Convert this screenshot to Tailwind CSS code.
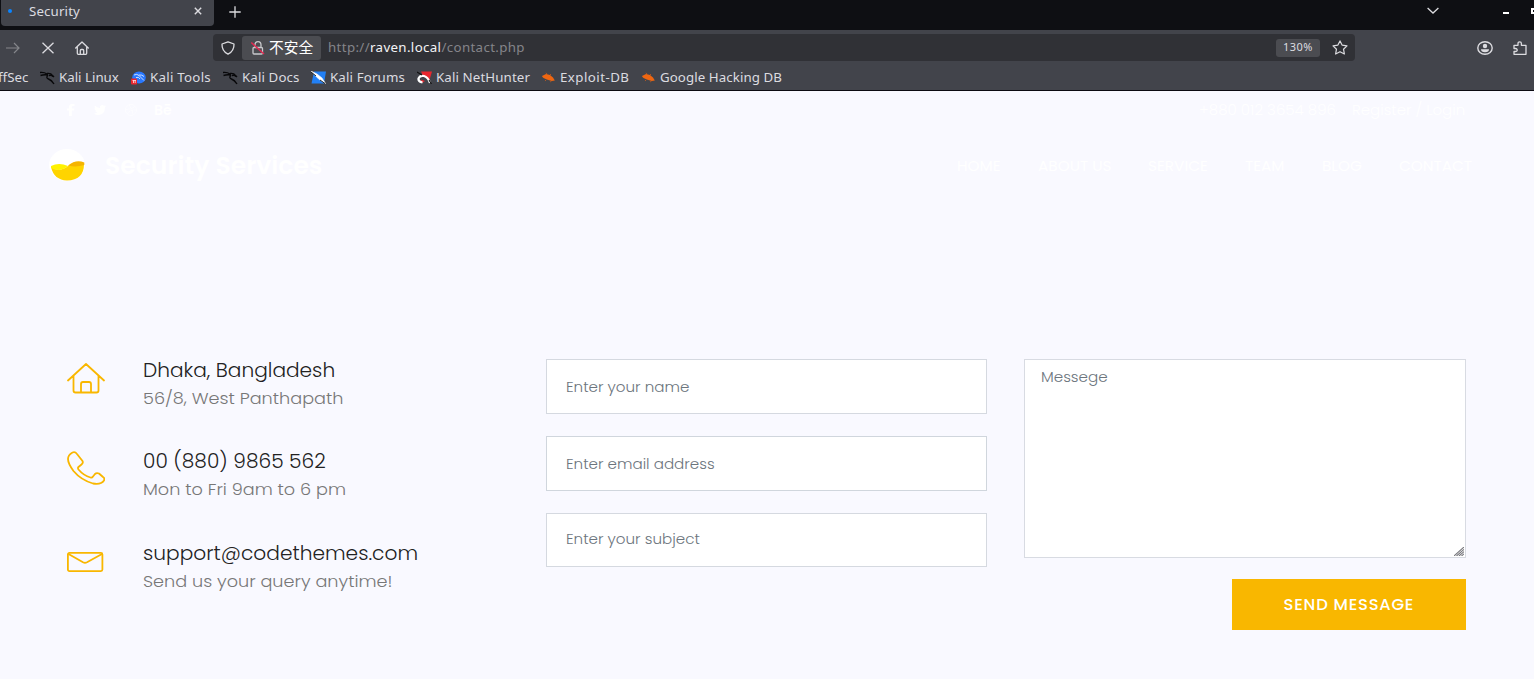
<!DOCTYPE html>
<html lang="en">
<head>
  <meta charset="UTF-8" />
  <meta name="viewport" content="width=device-width, initial-scale=1" />
  <title>Security</title>
  <script src="https://cdn.jsdelivr.net/npm/@tailwindcss/browser@4"></script>
</head>
<body class="w-[1534px] h-[679px] overflow-hidden bg-[#f9f9ff] font-['Noto_Sans','Noto_Sans_CJK_SC',sans-serif]">

  <!-- Tab bar -->
  <div class="h-[30px] bg-[#0e0f13] flex items-start text-[#dcdce0]">
    <div class="w-[213px] h-[26px] ml-px bg-[#42444b] rounded-b-[4px] flex items-center">
      <span class="w-1 h-1 rounded-full bg-[#0a84ff] ml-[7px] mb-1"></span>
      <span class="ml-[17px] mb-[3px] text-[13.3px] tracking-[0.14px]">Security</span>
      <svg class="w-2 h-2 ml-auto mr-3 mb-1" viewBox="0 0 8 8" fill="none" stroke="currentColor" stroke-width="1.4"><path d="M.8.8l6.4 6.4M7.2.8L.8 7.2" /></svg>
    </div>
    <svg class="w-3 h-3 ml-[15px] mt-[6px]" viewBox="0 0 12 12" fill="none" stroke="currentColor" stroke-width="1.3"><path d="M6 .3v11.4M.3 6h11.4" /></svg>
    <svg class="w-3 h-[7px] ml-auto mt-[7px]" viewBox="0 0 12 7" fill="none" stroke="currentColor" stroke-width="1.3"><path d="M.6 1L6 6l5.4-5" /></svg>
    <span class="w-[6px] h-[2px] bg-white ml-[64px] mt-[12px]"></span>
    <span class="w-[3px] h-[6px] border-2 border-r-0 border-white ml-[22px] mt-[8px]"></span>
  </div>

  <!-- Toolbar -->
  <div class="h-8 bg-[#42444b] flex items-center text-[#dcdce0] pt-[3px]">
    <svg class="w-[14px] h-3 ml-[6px] text-[#85868b]" viewBox="0 0 14 12" fill="none" stroke="currentColor" stroke-width="1.2"><path d="M0 6h13M8 1l5 5-5 5" /></svg>
    <svg class="w-3 h-3 ml-[22px]" viewBox="0 0 12 12" fill="none" stroke="currentColor" stroke-width="1.3"><path d="M.5.8l11 10.4M11.5.8L.5 11.2" /></svg>
    <svg class="w-[14px] h-[14px] ml-[21px]" viewBox="0 0 14 14" fill="none" stroke="currentColor" stroke-width="1.3" stroke-linejoin="round" stroke-linecap="round"><path d="M.7 7L7 1l6.3 6M2.3 6v6.3q0 1 1 1h7.4q1 0 1-1V6M5.3 13V9.5q0-1 1-1h1.4q1 0 1 1V13" /></svg>
    <div class="w-[1142px] h-[27px] ml-[124px] bg-[#303136] rounded-[4px] flex items-center">
      <svg class="w-[14px] h-[14px] ml-[8px]" viewBox="0 0 14 14" fill="none" stroke="currentColor" stroke-width="1.3" stroke-linejoin="round"><path d="M7 .8L13 3q.3 7-6 10.2Q.7 10 1 3z" /></svg>
      <div class="w-[79px] h-6 ml-[7px] bg-[#4b4c51] rounded-[3px] flex items-center">
        <svg class="w-[14px] h-[14px] ml-[9px]" viewBox="0 0 14 14" fill="none" stroke="#c9c9cd" stroke-width="1.3"><path d="M4 6V4q0-3.300 3-3.300T10 4v2M3 6.500h7.500q1 0 1 1V12q0 1-1 1H3q-1 0-1-1V7.500q0-1 1-1z" /><path stroke="#e22850" stroke-width="1.500" d="M.3 1.500L13 13" /></svg>
        <span class="ml-[4px] text-[14.7px] text-white whitespace-nowrap">不安全</span>
      </div>
      <span class="ml-[7px] text-[13.3px] tracking-[0.36px] text-[#85858a] whitespace-nowrap">http://<span class="text-[#f4f4f6]">raven.local</span>/contact.php</span>
      <div class="w-[44px] h-[18px] ml-auto bg-[#4b4c51] rounded-[3px] flex items-center justify-center"><span class="text-[11px] tracking-[0.45px]">130%</span></div>
      <svg class="w-4 h-[15px] ml-[12px] mr-[7px]" viewBox="0 0 16 15" fill="none" stroke="currentColor" stroke-width="1.2" stroke-linejoin="round"><path d="M8 .9l2.100 4.200 4.900.8-3.500 3.300.9 4.800L8 11.700 3.600 14l.9-4.800L1 5.900l4.900-.8z" /></svg>
    </div>
    <svg class="w-4 h-[14px] ml-[122px]" viewBox="0 0 16 14"><ellipse cx="8" cy="7" rx="7.2" ry="6.3" fill="none" stroke="currentColor" stroke-width="1.4" /><circle cx="8" cy="5" r="2.2" fill="currentColor" /><path d="M4 8.300h8q0 3-4 3t-4-3z" fill="currentColor" /></svg>
    <svg class="w-[14px] h-[14px] ml-[20px] shrink-0" viewBox="0 0 14 14" fill="none" stroke="currentColor" stroke-width="1.3" stroke-linejoin="round"><path d="M1 13.300V10.500h1.500q1.700 0 1.700-1.500T2.500 7.500H1V4.300h4V2.500Q5 .8 6.700.8t1.700 1.700v1.800H13v9z" /></svg>
  </div>

  <!-- Bookmarks -->
  <div class="h-[29px] pt-[3px] bg-[#42444b] border-b border-[#0c0b12] flex items-center text-[13.3px] text-[#dcdce0] whitespace-nowrap">
    <span class="w-[40px]"><span class="-ml-[2px]">ffSec</span></span>
    <a class="w-[91px] flex items-center gap-[4px]">
      <svg class="w-[15px] h-[14px] shrink-0" viewBox="0 0 15 14" fill="none" stroke="#08080a" stroke-width="1.4"><path d="M0 1.500q4-.5 7 1.500M.5 4.500Q4 3.200 8 4M8 4q-2.500 3 .5 4t5.500 5M7 2.500q4-.5 5.500 2l1.500 1.500M9 4.500q3-.5 4 1" /></svg>
      <span>Kali Linux</span>
    </a>
    <a class="w-[92px] flex items-center gap-[4px]">
      <svg class="w-[15px] h-[14px] shrink-0" viewBox="0 0 15 14"><ellipse cx="8" cy="6.5" rx="6.8" ry="6" fill="#2878ff" /><path d="M3 4q3-1.500 5 .5t5 5M5 6.500q3-1 4 1.500M8 4q3-.5 5 1.500" fill="none" stroke="#dce8ff" stroke-width=".9" /><rect y="7.5" width="6" height="6" rx="1" fill="#e8272f" /><path d="M1.500 9.500h3.500M2.500 9.500v2.500M4.200 9.500v2.500" stroke="#fff" stroke-width=".7" /></svg>
      <span class="tracking-[0.26px]">Kali Tools</span>
    </a>
    <a class="w-[88px] flex items-center gap-[4px]">
      <svg class="w-[15px] h-[14px] shrink-0" viewBox="0 0 15 14" fill="none" stroke="#08080a" stroke-width="1.4"><path d="M0 1.500q4-.5 7 1.500M.5 4.500Q4 3.200 8 4M8 4q-2.500 3 .5 4t5.500 5M7 2.500q4-.5 5.500 2l1.500 1.500M9 4.500q3-.5 4 1" /></svg>
      <span class="tracking-[0.11px]">Kali Docs</span>
    </a>
    <a class="w-[106px] flex items-center gap-[4px]">
      <svg class="w-[15px] h-[13px] shrink-0" viewBox="0 0 15 13"><path d="M3 .5h12l-2 12H.5z" fill="#2280f5" /><path d="M0 0l6 3 5 4 3.500 5.500-5-3-4-3.500z" fill="#fff" stroke="#fff" stroke-width=".6" /><path d="M0 1l5 4M9 9l5 3.500" stroke="#222" stroke-width="1" /></svg>
      <span class="tracking-[0.14px]">Kali Forums</span>
    </a>
    <a class="w-[125px] flex items-center gap-[4px]">
      <svg class="w-[15px] h-[13px] shrink-0" viewBox="0 0 15 13"><path d="M4 .5h11L12.500 9 6 5z" fill="#e8272f" /><path d="M4 8.500l4 1.500-3 2z" fill="#e8272f" /><path d="M5.500 11.500Q1 10.500 1.500 7.500 3 4 7 5t6 7" fill="none" stroke="#fff" stroke-width="2.2" /><path d="M0 1l5 3M12 9l2.500 4" stroke="#111" stroke-width="1.100" /></svg>
      <span class="tracking-[0.11px]">Kali NetHunter</span>
    </a>
    <a class="w-[100px] flex items-center gap-[5px]">
      <svg class="w-[13px] h-[11px] shrink-0" viewBox="0 0 13 11"><path d="M1 3.500l3-1.500 4 1 3 2.500 1.800 3-3 .5-5-1.500L1.500 6 0 4.500z" fill="#ee6611" /><path d="M5 2L4 .8M8 3l1-1M4 8l-1 1M9 9l-.5 1.200" stroke="#ee6611" stroke-width=".6" /></svg>
      <span class="tracking-[0.45px]">Exploit-DB</span>
    </a>
    <a class="flex items-center gap-[5px]">
      <svg class="w-[13px] h-[11px] shrink-0" viewBox="0 0 13 11"><path d="M1 3.500l3-1.500 4 1 3 2.500 1.800 3-3 .5-5-1.500L1.500 6 0 4.500z" fill="#ee6611" /><path d="M5 2L4 .8M8 3l1-1M4 8l-1 1M9 9l-.5 1.200" stroke="#ee6611" stroke-width=".6" /></svg>
      <span class="tracking-[0.07px]">Google Hacking DB</span>
    </a>
  </div>

  <div class="font-[Poppins,Inter,sans-serif]">
    <!-- Header -->
    <header class="h-[268px] text-white">
      <div class="h-[38px] pl-[67px] pr-[76px] flex items-center text-[14px] font-light whitespace-nowrap">
        <svg class="w-2 h-3" viewBox="0 0 8 12" fill="currentColor"><path d="M2 12V6.500H0v-2h2V3q0-3 3-3h2.500v2H6Q4.800 2 4.800 3v1.500h2.700L7 6.500H4.800V12z" /></svg>
        <svg class="w-3 h-[10px] ml-[19px]" viewBox="0 0 12 10" fill="currentColor"><path d="M0 8.500q2 0 3.200-1Q1.500 7 1.200 5.800h1Q.4 5 .4 3.200l1 .3Q0 2.200.8.4 3 2.800 6 2.900 5.700 0 8.300 0q1 0 1.700.8L11.600.2 10.800 1.500 12 1.200 11 2.500Q10.800 10 4 10 1.700 10 0 8.500z" /></svg>
        <svg class="w-3 h-3 ml-[19px] opacity-60" viewBox="0 0 12 12" fill="none" stroke="currentColor"><circle cx="6" cy="6" r="5.5" /><path d="M4 1q4 4 4 10M1 5.500q6 0 9-3M2 10q3-5 9-4" /></svg>
        <span class="ml-[17px] font-semibold">Bē</span>
        <span class="ml-auto origin-left scale-x-[1.07]">+880 012 3654 896</span>
        <span class="ml-[25px] origin-left scale-x-[1.07]">Register / Login</span>
      </div>
      <div class="h-[74px] pl-[49px] pr-[62px] flex items-center">
        <svg class="w-[36px] h-[32px] mb-[2px]" viewBox="0 0 36 32"><ellipse cx="18" cy="16" rx="18" ry="16" fill="#fff" /><path d="M2 18q8 6 17-1t16-2q0 16-17 16.500Q5 31 2 18z" fill="#ffd400" /><path d="M19 16.500Q27 10 35.300 13.500v2.500q-8 2.500-16.300.5z" fill="#f5b400" /><path d="M2 17q8-4 17 0-8 7-17 2z" fill="#fff200" /></svg>
        <span class="ml-[20px] text-[24px] font-semibold whitespace-nowrap origin-left scale-x-[1.045]">Security Services</span>
        <nav class="ml-auto flex text-[14px] whitespace-nowrap">
          <a class="w-[81px]"><span class="inline-block origin-left scale-x-[1.09]">HOME</span></a>
          <a class="w-[110px]"><span class="inline-block origin-left scale-x-[1.09]">ABOUT US</span></a>
          <a class="w-[97px]"><span class="inline-block origin-left scale-x-[1.09]">SERVICE</span></a>
          <a class="w-[77px]"><span class="inline-block origin-left scale-x-[1.09]">TEAM</span></a>
          <a class="w-[77px]"><span class="inline-block origin-left scale-x-[1.09]">BLOG</span></a>
          <a class="w-[73px]"><span class="inline-block origin-left scale-x-[1.09]">CONTACT</span></a>
        </nav>
      </div>
    </header>

    <!-- Contact -->
    <main class="pl-[67px] flex items-start">
      <div class="w-[479px] flex flex-col whitespace-nowrap">
        <div class="h-[91px] flex">
          <svg class="w-[38px] h-[32px] mt-[4px]" viewBox="0 0 38 32" fill="none" stroke="#f9b700" stroke-width="1.8" stroke-linecap="round" stroke-linejoin="round"><path d="M1 17.500L19 1l18 16.500M6.500 13v14.500q0 2 2 2h21q2 0 2-2V13M14 29V21q0-2 2-2h6q2 0 2 2V29" /></svg>
          <div class="ml-[38px] mt-px">
            <h3 class="text-[19px] leading-[22px] font-light text-[#222222]"><span class="inline-block origin-left scale-x-[1.06]">Dhaka, Bangladesh</span></h3>
            <p class="mt-[5px] text-[16px] leading-[24px] font-light text-[#777777]"><span class="inline-block origin-left scale-x-[1.104]">56/8, West Panthapath</span></p>
          </div>
        </div>
        <div class="h-[92px] flex">
          <svg class="w-[38px] h-[34px] mt-px" viewBox="0 0 38 34" fill="none" stroke="#f9b700" stroke-width="1.8" stroke-linejoin="round"><path d="M1 8Q1 4 5.500 1.500 8 .3 10 3l5.500 7q1 2-1 3.500l-3 2.500q-1 1 0 2.500 5 6 12 8 1.500.5 2.500-1l2-2.500q1.500-1.500 4-.5L36 26q2 1 1 3.500-3 4.500-11 3Q14 29 6.500 20 1 12.500 1 8z" /></svg>
          <div class="ml-[38px] mt-px">
            <h3 class="text-[19px] leading-[22px] font-light text-[#222222]"><span class="inline-block origin-left scale-x-[1.06]">00 (880) 9865 562</span></h3>
            <p class="mt-[5px] text-[16px] leading-[24px] font-light text-[#777777]"><span class="inline-block origin-left scale-x-[1.104]">Mon to Fri 9am to 6 pm</span></p>
          </div>
        </div>
        <div class="flex">
          <svg class="w-[38px] h-[20px] mt-[10px]" viewBox="0 0 38 20" fill="none" stroke="#f9b700" stroke-width="1.8" stroke-linejoin="round"><rect x=".9" y=".9" width="34.5" height="18.2" rx="1.5" /><path d="M1.500 2L16 10.300q2 1 4 0L35 2" /></svg>
          <div class="ml-[38px] mt-px">
            <h3 class="text-[19px] leading-[22px] font-light text-[#222222]"><span class="inline-block origin-left scale-x-[1.062]">support@codethemes.com</span></h3>
            <p class="mt-[5px] text-[16px] leading-[24px] font-light text-[#777777]"><span class="inline-block origin-left scale-x-[1.104]">Send us your query anytime!</span></p>
          </div>
        </div>
      </div>
      <form class="flex items-start text-[14px] font-light text-[#6c757d] whitespace-nowrap">
        <div class="w-[441px] flex flex-col gap-[22px]">
          <div class="h-[55px] px-[19px] pt-[2px] bg-white border border-[#d5d9e0] flex items-center"><span class="origin-left scale-x-[1.08]">Enter your name</span></div>
          <div class="h-[55px] px-[19px] pt-px bg-white border border-[#d0d6dd] flex items-center"><span class="origin-left scale-x-[1.08]">Enter email address</span></div>
          <div class="h-[54px] px-[19px] pb-px bg-white border border-[#d5d9e0] flex items-center"><span class="origin-left scale-x-[1.08]">Enter your subject</span></div>
        </div>
        <div class="w-[442px] ml-[37px] flex flex-col items-end">
          <div class="relative w-full h-[199px] px-[16px] py-[7px] bg-white border border-[#d8dbe2]">
            <span class="inline-block origin-left scale-x-[1.08]">Messege</span>
            <svg class="absolute right-px bottom-px w-[10px] h-[9px]" viewBox="0 0 10 9" stroke="#77777c" stroke-width="1.1"><path d="M0 9L10 0M2.500 9L10 2.300M5 9l5-4.400M7.500 9l2.500-2.200" /></svg>
          </div>
          <button class="w-[234px] h-[51px] mt-[21px] pt-[2px] bg-[#f9b700] text-white text-[15px] font-medium"><span class="inline-block scale-x-[1.09] tracking-[0.7px]">SEND MESSAGE</span></button>
        </div>
      </form>
    </main>
  </div>
</body>
</html>
